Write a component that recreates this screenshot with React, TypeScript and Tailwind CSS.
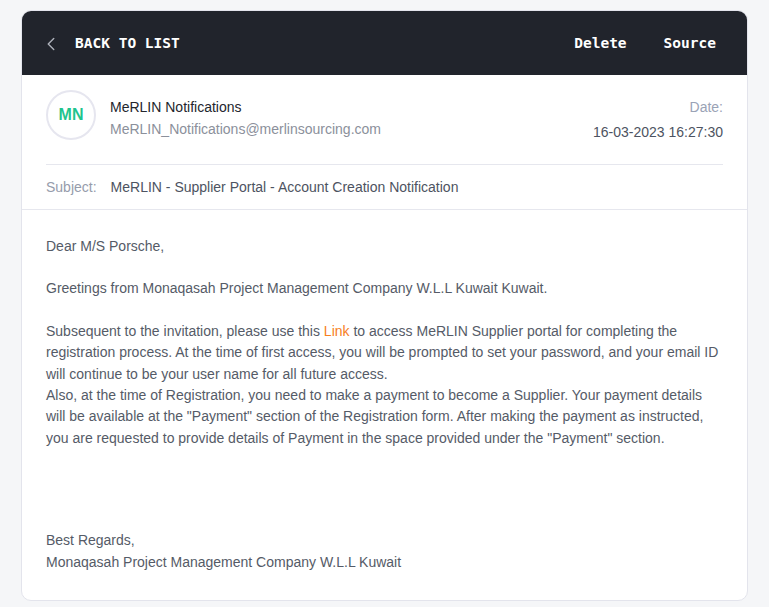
import { ChevronLeft } from "lucide-react";

const body = "font-['Liberation_Sans',Arial,sans-serif]";

export default function App() {
  return (
    <div className={`min-h-[607px] bg-[#f5f6f8] px-[21px] pt-[10px] pb-[7px] ${body}`}>
      <div className="overflow-hidden rounded-[10px] border border-[#e3e4ec] bg-white">
        <div className="flex h-[64px] items-center justify-between bg-[#21242c] pt-[2px] pl-[18px] pr-[31px] font-['DejaVu_Sans_Mono',monospace] text-[14.5px] font-bold text-white">
          <button className="flex items-center gap-[13px]">
            <ChevronLeft className="h-[22px] w-[22px] text-[#a9adb6]" strokeWidth={1.6} />
            <span>BACK TO LIST</span>
          </button>
          <div className="flex items-center gap-[37px]">
            <button>Delete</button>
            <button>Source</button>
          </div>
        </div>

        <div className="px-[24px]">
          <div className="flex justify-between border-b border-[#e6e7ee] pt-[15px] pb-[21px]">
            <div className="flex gap-[14px]">
              <div className="flex h-[50px] w-[50px] items-center justify-center rounded-full border-2 border-[#e6e6ef] text-[16px] font-bold text-[#1fc48e]">
                MN
              </div>
              <div className="pt-[6px] text-[14px] leading-[22px]">
                <div className="text-[#23262d]">MeRLIN Notifications</div>
                <div className="text-[#8b909b]">MeRLIN_Notifications@merlinsourcing.com</div>
              </div>
            </div>
            <div className="pt-[6px] text-right text-[14px]">
              <div className="leading-[22px] text-[#9aa3b6]">Date:</div>
              <div className="mt-[3px] leading-[22px] text-[#4d5361]">16-03-2023 16:27:30</div>
            </div>
          </div>
          <div className="flex gap-[14px] py-[11px] text-[14px] leading-[22px]">
            <span className="text-[#969cab]">Subject:</span>
            <span className="text-[#4d5361]">MeRLIN - Supplier Portal - Account Creation Notification</span>
          </div>
        </div>

        <div className="border-t border-[#e6e7ee] px-[24px] pt-[26px] pb-[27px] text-[14px] leading-[21.4px] text-[#555b67]">
          <p>Dear M/S Porsche,</p>
          <p className="mt-[21px]">Greetings from Monaqasah Project Management Company W.L.L Kuwait Kuwait.</p>
          <p className="mt-[21px]">
            Subsequent to the invitation, please use this <a className="text-[#f7801e]">Link</a> to access MeRLIN
            Supplier portal for completing the registration process. At the time of first access, you will be
            prompted to set your password, and your email ID will continue to be your user name for all future
            access.
            <br />
            Also, at the time of Registration, you need to make a payment to become a Supplier. Your payment details
            will be available at the "Payment" section of the Registration form. After making the payment as
            instructed, you are requested to provide details of Payment in the space provided under the "Payment"
            section.
          </p>
          <p className="mt-[81px]">
            Best Regards,
            <br />
            Monaqasah Project Management Company W.L.L Kuwait
          </p>
        </div>
      </div>
    </div>
  );
}
